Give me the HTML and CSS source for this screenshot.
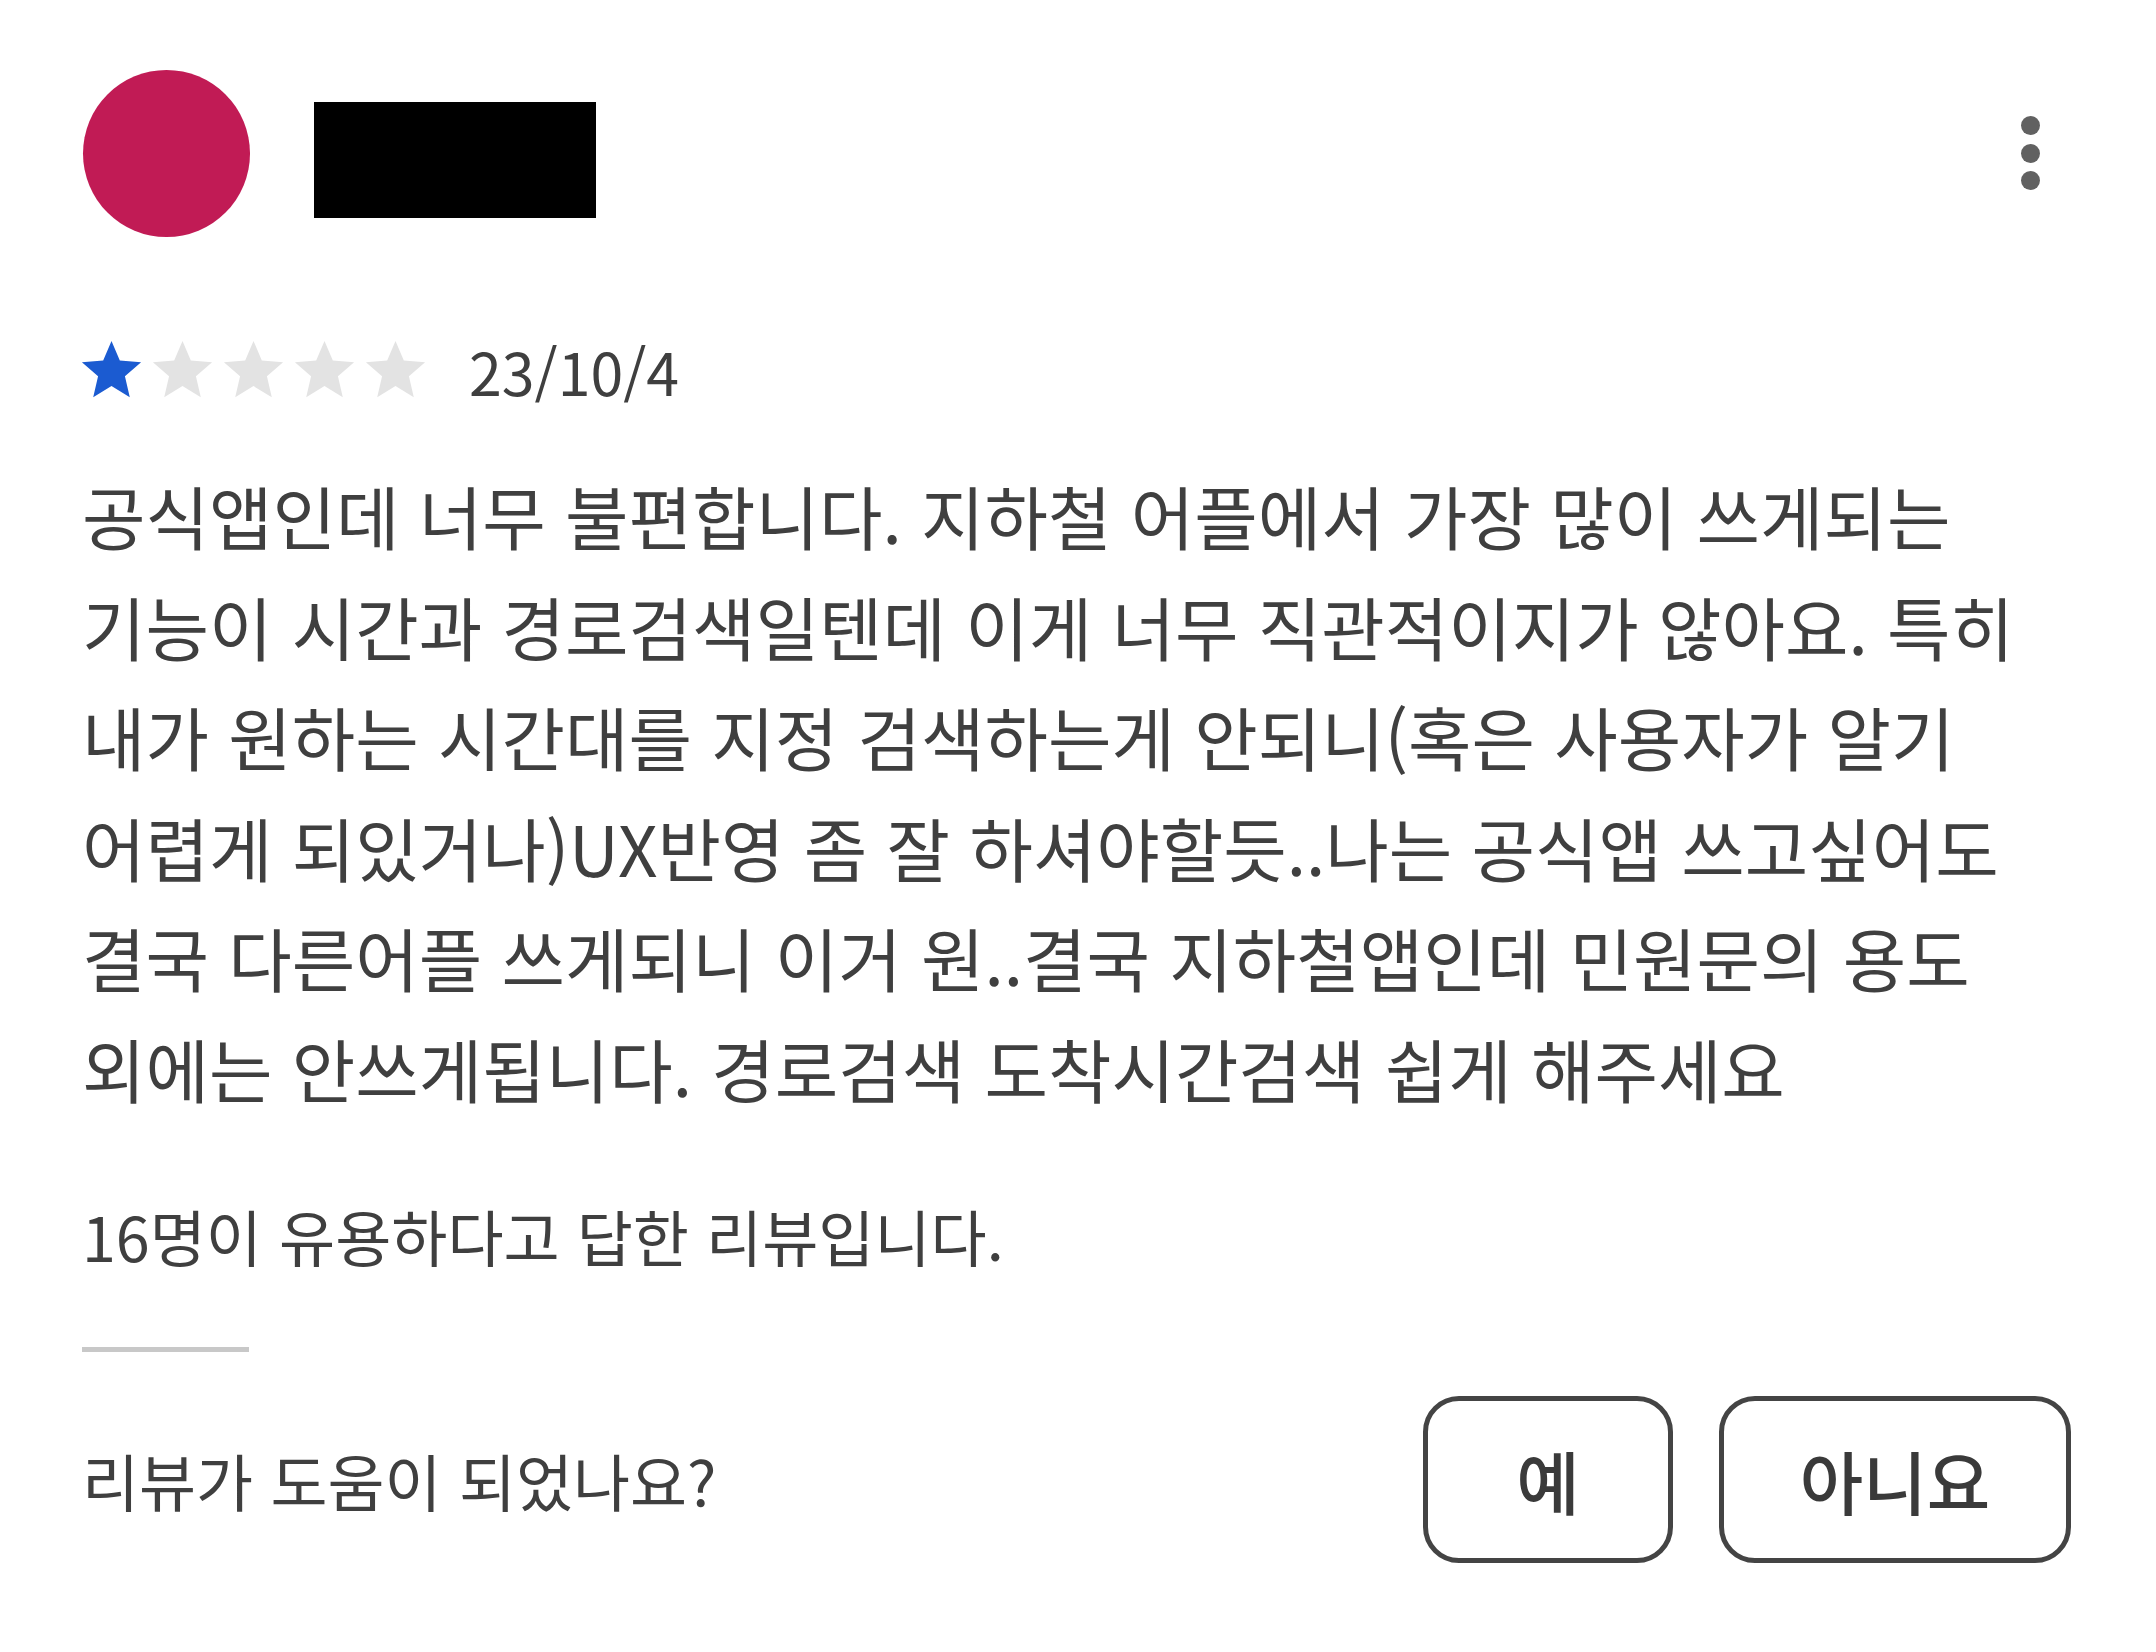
FILE: index.html
```html
<!DOCTYPE html>
<html lang="ko">
<head>
<meta charset="utf-8">
<title>리뷰</title>
<link rel="stylesheet" href="styles.css">
</head>
<body>
<div class="card">
  <header class="head">
    <div class="avatar"></div>
    <div class="name-redacted"></div>
    <button class="menu" aria-label="더보기">
      <span class="dot"></span><span class="dot"></span><span class="dot"></span>
    </button>
  </header>

  <div class="meta">
    <div class="stars">
      <svg class="star on" viewBox="0 0 24 24"><path d="M12 17.27L18.18 21l-1.64-7.03L22 9.24l-7.19-.61L12 2 9.19 8.63 2 9.24l5.46 4.73L5.82 21z"/></svg>
      <svg class="star" viewBox="0 0 24 24"><path d="M12 17.27L18.18 21l-1.64-7.03L22 9.24l-7.19-.61L12 2 9.19 8.63 2 9.24l5.46 4.73L5.82 21z"/></svg>
      <svg class="star" viewBox="0 0 24 24"><path d="M12 17.27L18.18 21l-1.64-7.03L22 9.24l-7.19-.61L12 2 9.19 8.63 2 9.24l5.46 4.73L5.82 21z"/></svg>
      <svg class="star" viewBox="0 0 24 24"><path d="M12 17.27L18.18 21l-1.64-7.03L22 9.24l-7.19-.61L12 2 9.19 8.63 2 9.24l5.46 4.73L5.82 21z"/></svg>
      <svg class="star" viewBox="0 0 24 24"><path d="M12 17.27L18.18 21l-1.64-7.03L22 9.24l-7.19-.61L12 2 9.19 8.63 2 9.24l5.46 4.73L5.82 21z"/></svg>
    </div>
    <span class="date">23/10/4</span>
  </div>

  <p class="body">공식앱인데 너무 불편합니다. 지하철 어플에서 가장 많이 쓰게되는<br>기능이 시간과 경로검색일텐데 이게 너무 직관적이지가 않아요. 특히<br>내가 원하는 시간대를 지정 검색하는게 안되니(혹은 사용자가 알기<br>어렵게 되있거나)UX반영 좀 잘 하셔야할듯..나는 공식앱 쓰고싶어도<br>결국 다른어플 쓰게되니 이거 원..결국 지하철앱인데 민원문의 용도<br>외에는 안쓰게됩니다. 경로검색 도착시간검색 쉽게 해주세요</p>

  <p class="helpful">16명이 유용하다고 답한 리뷰입니다.</p>

  <hr class="divider">

  <div class="ask">
    <span class="ask-text">리뷰가 도움이 되었나요?</span>
    <div class="ask-buttons">
      <button class="btn btn-yes">예</button>
      <button class="btn btn-no">아니요</button>
    </div>
  </div>
</div>
</body>
</html>
```

FILE: styles.css
```css
* { box-sizing: border-box; }

html, body {
  margin: 0;
  padding: 0;
  background: #ffffff;
}

body {
  font-family: "Noto Sans CJK KR", "Noto Sans", sans-serif;
  color: #3f3f3f;
}

.card {
  padding: 70px 85px 0 82px;
}

.head {
  display: flex;
  align-items: flex-start;
}

.avatar {
  width: 167px;
  height: 167px;
  border-radius: 50%;
  background: #c11b55;
  flex: none;
  margin-left: 1px;
}

.name-redacted {
  width: 282px;
  height: 116px;
  background: #000;
  margin-left: 64px;
  margin-top: 32px;
}

.menu {
  margin-left: auto;
  margin-top: 46px;
  width: 82px;
  border: 0;
  background: transparent;
  padding: 0;
  display: flex;
  flex-direction: column;
  align-items: center;
  gap: 8.5px;
}

.dot {
  width: 19px;
  height: 19px;
  border-radius: 50%;
  background: #616161;
}

.meta {
  display: flex;
  align-items: center;
  margin-top: 98px;
}

.stars {
  display: flex;
  margin-left: -6px;
}

.star {
  width: 71px;
  height: 71px;
  fill: #e3e3e3;
}

.star.on { fill: #1b5bd1; }

.date {
  margin-left: 38px;
  font-size: 59px;
  line-height: 1;
  color: #3f3f3f;
}

.body {
  margin: 54px 0 0;
  font-size: 69px;
  line-height: 110.5px;
  white-space: nowrap;
}

.helpful {
  margin: 73px 0 0;
  font-size: 61px;
  line-height: 80px;
}

.divider {
  width: 167px;
  height: 5px;
  border: 0;
  background: #c8c8c8;
  margin: 71px 0 0;
}

.ask {
  display: flex;
  align-items: center;
  justify-content: space-between;
  margin-top: 44px;
}

.ask-text {
  font-size: 62px;
}

.ask-buttons {
  display: flex;
  gap: 46px;
}

.btn {
  height: 167px;
  border: 5px solid #444444;
  border-radius: 36px;
  background: #fff;
  font-family: "Noto Sans CJK KR", sans-serif;
  font-size: 69px;
  font-weight: 500;
  color: #3a3a3a;
  padding: 0;
}

.btn-yes { width: 250px; }
.btn-no { width: 352px; }
```
